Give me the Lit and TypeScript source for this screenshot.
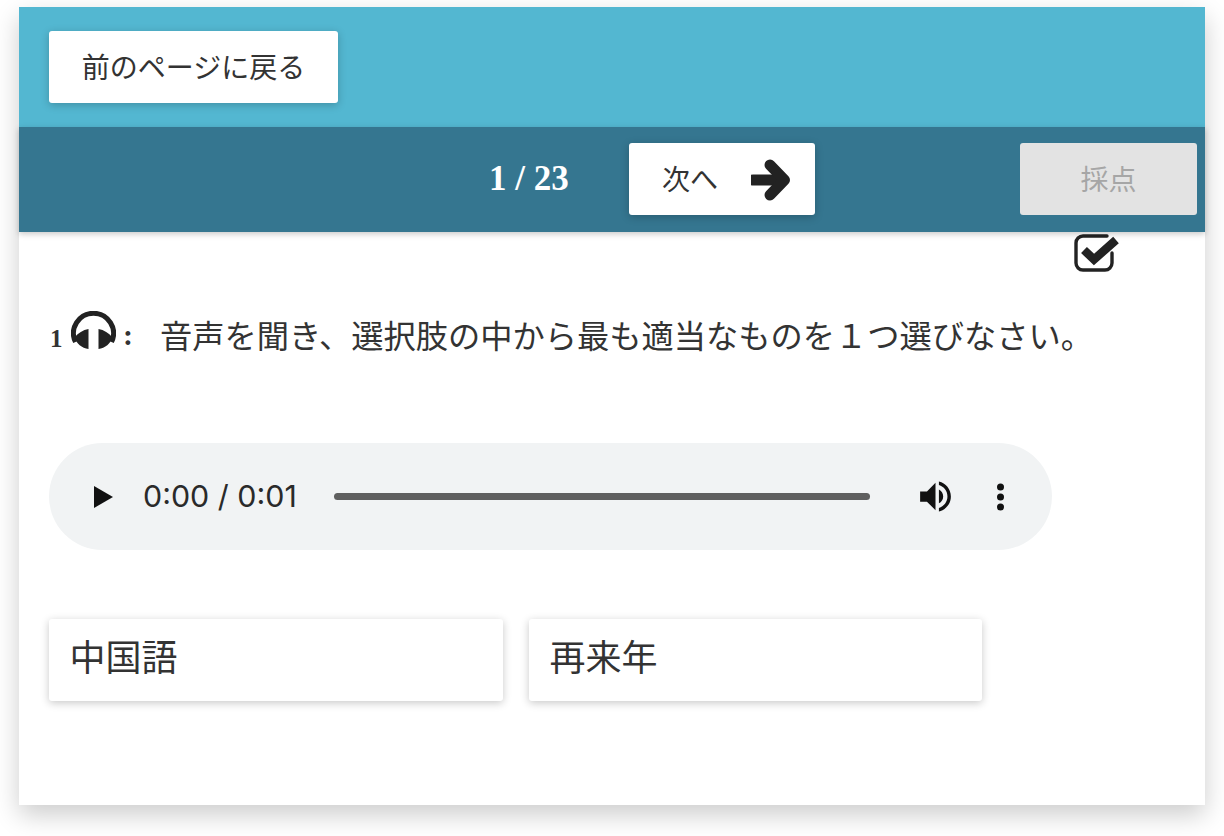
import { LitElement, html, css } from 'lit';
import { customElement } from 'lit/decorators.js';

@customElement('app-root')
export class AppRoot extends LitElement {
  static styles = css`
    :host {
      display: block;
      padding: 7px 19px 31px;
      background: #fff;
      font-family: "Noto Sans CJK JP", "Liberation Sans", sans-serif;
      color: #333;
    }
    .card {
      height: 798px;
      background: #fff;
      box-shadow: 0 10px 24px rgba(0, 0, 0, 0.2);
    }
    .top {
      height: 120px;
      box-sizing: border-box;
      padding: 24px 30px;
      background: #53b7d1;
    }
    .btn {
      display: flex;
      align-items: center;
      justify-content: center;
      box-sizing: border-box;
      height: 72px;
      padding-bottom: 3px;
      background: #fff;
      border-radius: 3px;
      font-size: 28px;
      line-height: 1;
      color: #333;
      box-shadow: 0 2px 8px rgba(0, 0, 0, 0.22);
    }
    .back { width: 289px; }
    .bar {
      position: relative;
      display: flex;
      align-items: flex-start;
      height: 105px;
      box-sizing: border-box;
      padding: 16px 8px 0 470px;
      background: #357690;
      box-shadow: 0 2px 6px rgba(0, 0, 0, 0.22);
    }
    .count {
      width: 140px;
      font-family: "Liberation Serif", serif;
      font-weight: 700;
      font-size: 35px;
      line-height: 72px;
      color: #fff;
    }
    .next {
      width: 186px;
      gap: 33px;
      padding-left: 9px;
    }
    .next svg { width: 40px; height: 42px; margin-top: 4px; fill: none; stroke: #222; stroke-width: 11; }
    .score {
      width: 177px;
      margin-left: auto;
      background: #e3e3e3;
      color: #a6a6a6;
      box-shadow: none;
    }
    .check-row {
      display: flex;
      justify-content: flex-end;
      padding: 2px 84px 0 0;
    }
    .check-row svg { display: block; width: 47px; height: 38px; }
    .question {
      display: flex;
      align-items: flex-end;
      height: 40px;
      margin: 37px 0 0 31px;
    }
    .num {
      width: 21px;
      font-family: "Liberation Serif", serif;
      font-weight: 700;
      font-size: 25px;
      line-height: 30px;
      margin-bottom: -5px;
    }
    .question svg { width: 45px; height: 38px; fill: #222; }
    .colon {
      width: 44px;
      padding-left: 7px;
      box-sizing: border-box;
      font-family: "Liberation Serif", serif;
      font-weight: 700;
      font-size: 30px;
      line-height: 38px;
      margin-bottom: -5px;
    }
    .q-text {
      font-size: 32.25px;
      line-height: 38px;
      white-space: nowrap;
      margin-bottom: -4px;
    }
    .player {
      display: flex;
      align-items: center;
      width: 1003px;
      height: 107px;
      box-sizing: border-box;
      margin: 94px 0 0 30px;
      padding-left: 45px;
      border-radius: 54px;
      background: #f1f3f4;
      color: #222;
    }
    .play { width: 0; height: 0; border-style: solid; border-width: 11.5px 0 11.5px 19px; border-color: transparent transparent transparent #111; }
    .time {
      width: 191px;
      margin-left: 30px;
      font-family: Inter, "Liberation Sans", sans-serif;
      font-size: 30.4px;
      line-height: 1;
      color: #2a2a2a;
    }
    .track {
      width: 536px;
      height: 7px;
      border-radius: 4px;
      background: #5f5f5f;
    }
    .vol { width: 41px; height: 41px; margin-left: 45px; fill: #111; }
    .dots { width: 7px; height: 28px; margin-left: 41px; fill: #111; }
    .choices {
      display: flex;
      gap: 26px;
      margin: 69px 0 0 30px;
    }
    .choice {
      width: 454px;
      height: 82px;
      box-sizing: border-box;
      padding: 0 20.5px;
      border-radius: 3px;
      background: #fff;
      font-size: 36px;
      line-height: 73px;
      box-shadow: 0 2px 8px rgba(0, 0, 0, 0.22);
    }
    .choice + .choice { width: 453px; }
  `;

  render() {
    return html`
      <div class="card">
        <div class="top">
          <div class="btn back">前のページに戻る</div>
        </div>
        <div class="bar">
          <div class="count">1 / 23</div>
          <div class="btn next">
            <span>次へ</span>
            <svg viewBox="0 0 40 42">
              <path d="M2 21h28" stroke-linecap="round"/>
              <path d="M19 6l14.5 15L19 36" stroke-linecap="round" stroke-linejoin="round"/>
            </svg>
          </div>
          <div class="btn score">採点</div>
        </div>
        <div class="check-row">
          <svg viewBox="0 0 47 38" fill="none" stroke="#222">
            <path d="M33 2H9a7 7 0 0 0-7 7v20a7 7 0 0 0 7 7h22a7 7 0 0 0 7-7V19" stroke-width="3.4" stroke-linecap="round"/>
            <path d="M10 16l10 9.5L42 6" stroke-width="8.5"/>
          </svg>
        </div>
        <div class="question">
          <span class="num">1</span>
          <svg viewBox="0 0 45 38">
            <path d="M4.5 31A20 20 0 1 1 40.5 31" fill="none" stroke="#222" stroke-width="5"/>
            <path d="M17.5 18v20C11 37 5 33 4 26c3-4 8-7 13.5-8zM27.5 18v20c6.5-1 12.5-5 13.5-12-3-4-8-7-13.5-8z"/>
          </svg>
          <span class="colon">:</span>
          <span class="q-text">音声を聞き、選択肢の中から最も適当なものを１つ選びなさい。</span>
        </div>
        <div class="player">
          <span class="play"></span>
          <span class="time">0:00 / 0:01</span>
          <span class="track"></span>
          <svg class="vol" viewBox="0 0 24 24"><path d="M3 9v6h4l5 5V4L7 9H3zm13.5 3c0-1.77-1.02-3.29-2.5-4.03v8.05c1.48-.73 2.5-2.25 2.5-4.02zM14 3.23v2.06c2.89.86 5 3.54 5 6.71s-2.11 5.85-5 6.71v2.06c4.01-.91 7-4.49 7-8.77s-2.99-7.86-7-8.77z"/></svg>
          <svg class="dots" viewBox="0 0 7 28"><circle cx="3.5" cy="4" r="3.5"/><circle cx="3.5" cy="14" r="3.5"/><circle cx="3.5" cy="24" r="3.5"/></svg>
        </div>
        <div class="choices">
          <div class="choice">中国語</div>
          <div class="choice">再来年</div>
        </div>
      </div>
    `;
  }
}
